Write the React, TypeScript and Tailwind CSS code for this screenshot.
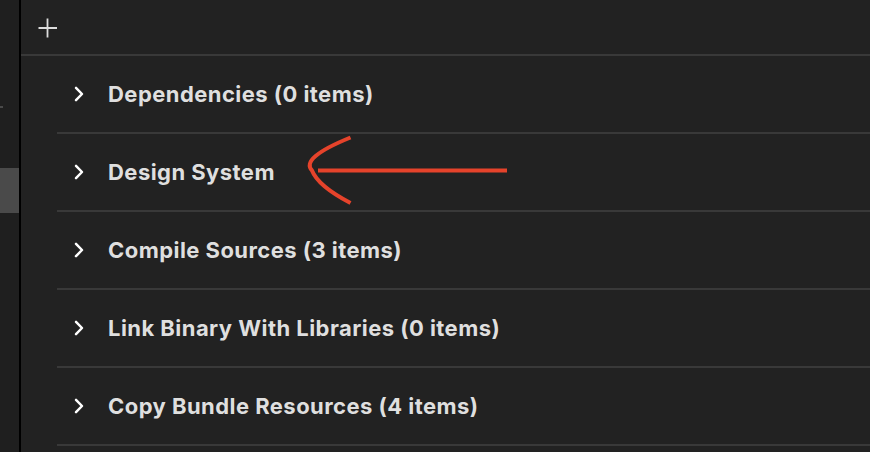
import React from 'react';

const phases = [
    'Dependencies (0 items)',
    'Design System',
    'Compile Sources (3 items)',
    'Link Binary With Libraries (0 items)',
    'Copy Bundle Resources (4 items)',
];

const Chevron: React.FC = () => (
    <svg width="12" height="16" viewBox="0 0 12 16" className="shrink-0">
        <path d="M3 1.8 L9 8 L3 14.2" fill="none" stroke="#ffffff" strokeWidth="2.5" strokeLinecap="round" strokeLinejoin="round" />
    </svg>
);

const PlusIcon: React.FC = () => (
    <svg width="20" height="20" viewBox="0 0 20 20">
        <path d="M9.5 0.5 V19.5 M0.5 10 H19" stroke="#dcdcdc" strokeWidth="1.8" />
    </svg>
);

const ArrowAnnotation: React.FC = () => (
    <svg className="absolute left-[300px] top-[130px] pointer-events-none" width="220" height="80" viewBox="300 130 220 80">
        <path d="M318 170.5 H507" stroke="#e5432b" strokeWidth="4" fill="none" />
        <path d="M350.5 137.5 Q300 158 312 170.5 Q318 186 350.5 203" stroke="#e5432b" strokeWidth="4" fill="none" />
    </svg>
);

export default function App() {
    return (
        <div className="relative flex w-[870px] h-[452px] overflow-hidden bg-[#222222]" style={{ fontFamily: 'Inter, "Noto Sans", sans-serif' }}>
            {/* Left sidebar strip */}
            <div className="w-[21px] shrink-0 flex flex-col bg-[#1f1f1f] border-r-2 border-black">
                <div className="h-[106px]"></div>
                <div className="h-[2px] w-[3px] bg-[#4a4a4a]"></div>
                <div className="h-[60px]"></div>
                <div className="h-[45px] bg-[#4a4a4a]"></div>
            </div>

            <div className="flex-1 flex flex-col">
                {/* Toolbar */}
                <div className="h-[56px] flex items-center pl-[17px] pt-[1px] border-b-2 border-[#393939]">
                    <PlusIcon />
                </div>

                {/* Build phases */}
                <div className="ml-[36px] flex flex-col">
                    {phases.map((name) => (
                        <div key={name} className="h-[78px] flex items-center pl-[16px] border-b-2 border-[#393939]">
                            <Chevron />
                            <span className="ml-[23px] text-[22px] font-bold text-[#dfdfdf] tracking-[0.45px]">{name}</span>
                        </div>
                    ))}
                </div>
            </div>

            <ArrowAnnotation />
        </div>
    );
}
